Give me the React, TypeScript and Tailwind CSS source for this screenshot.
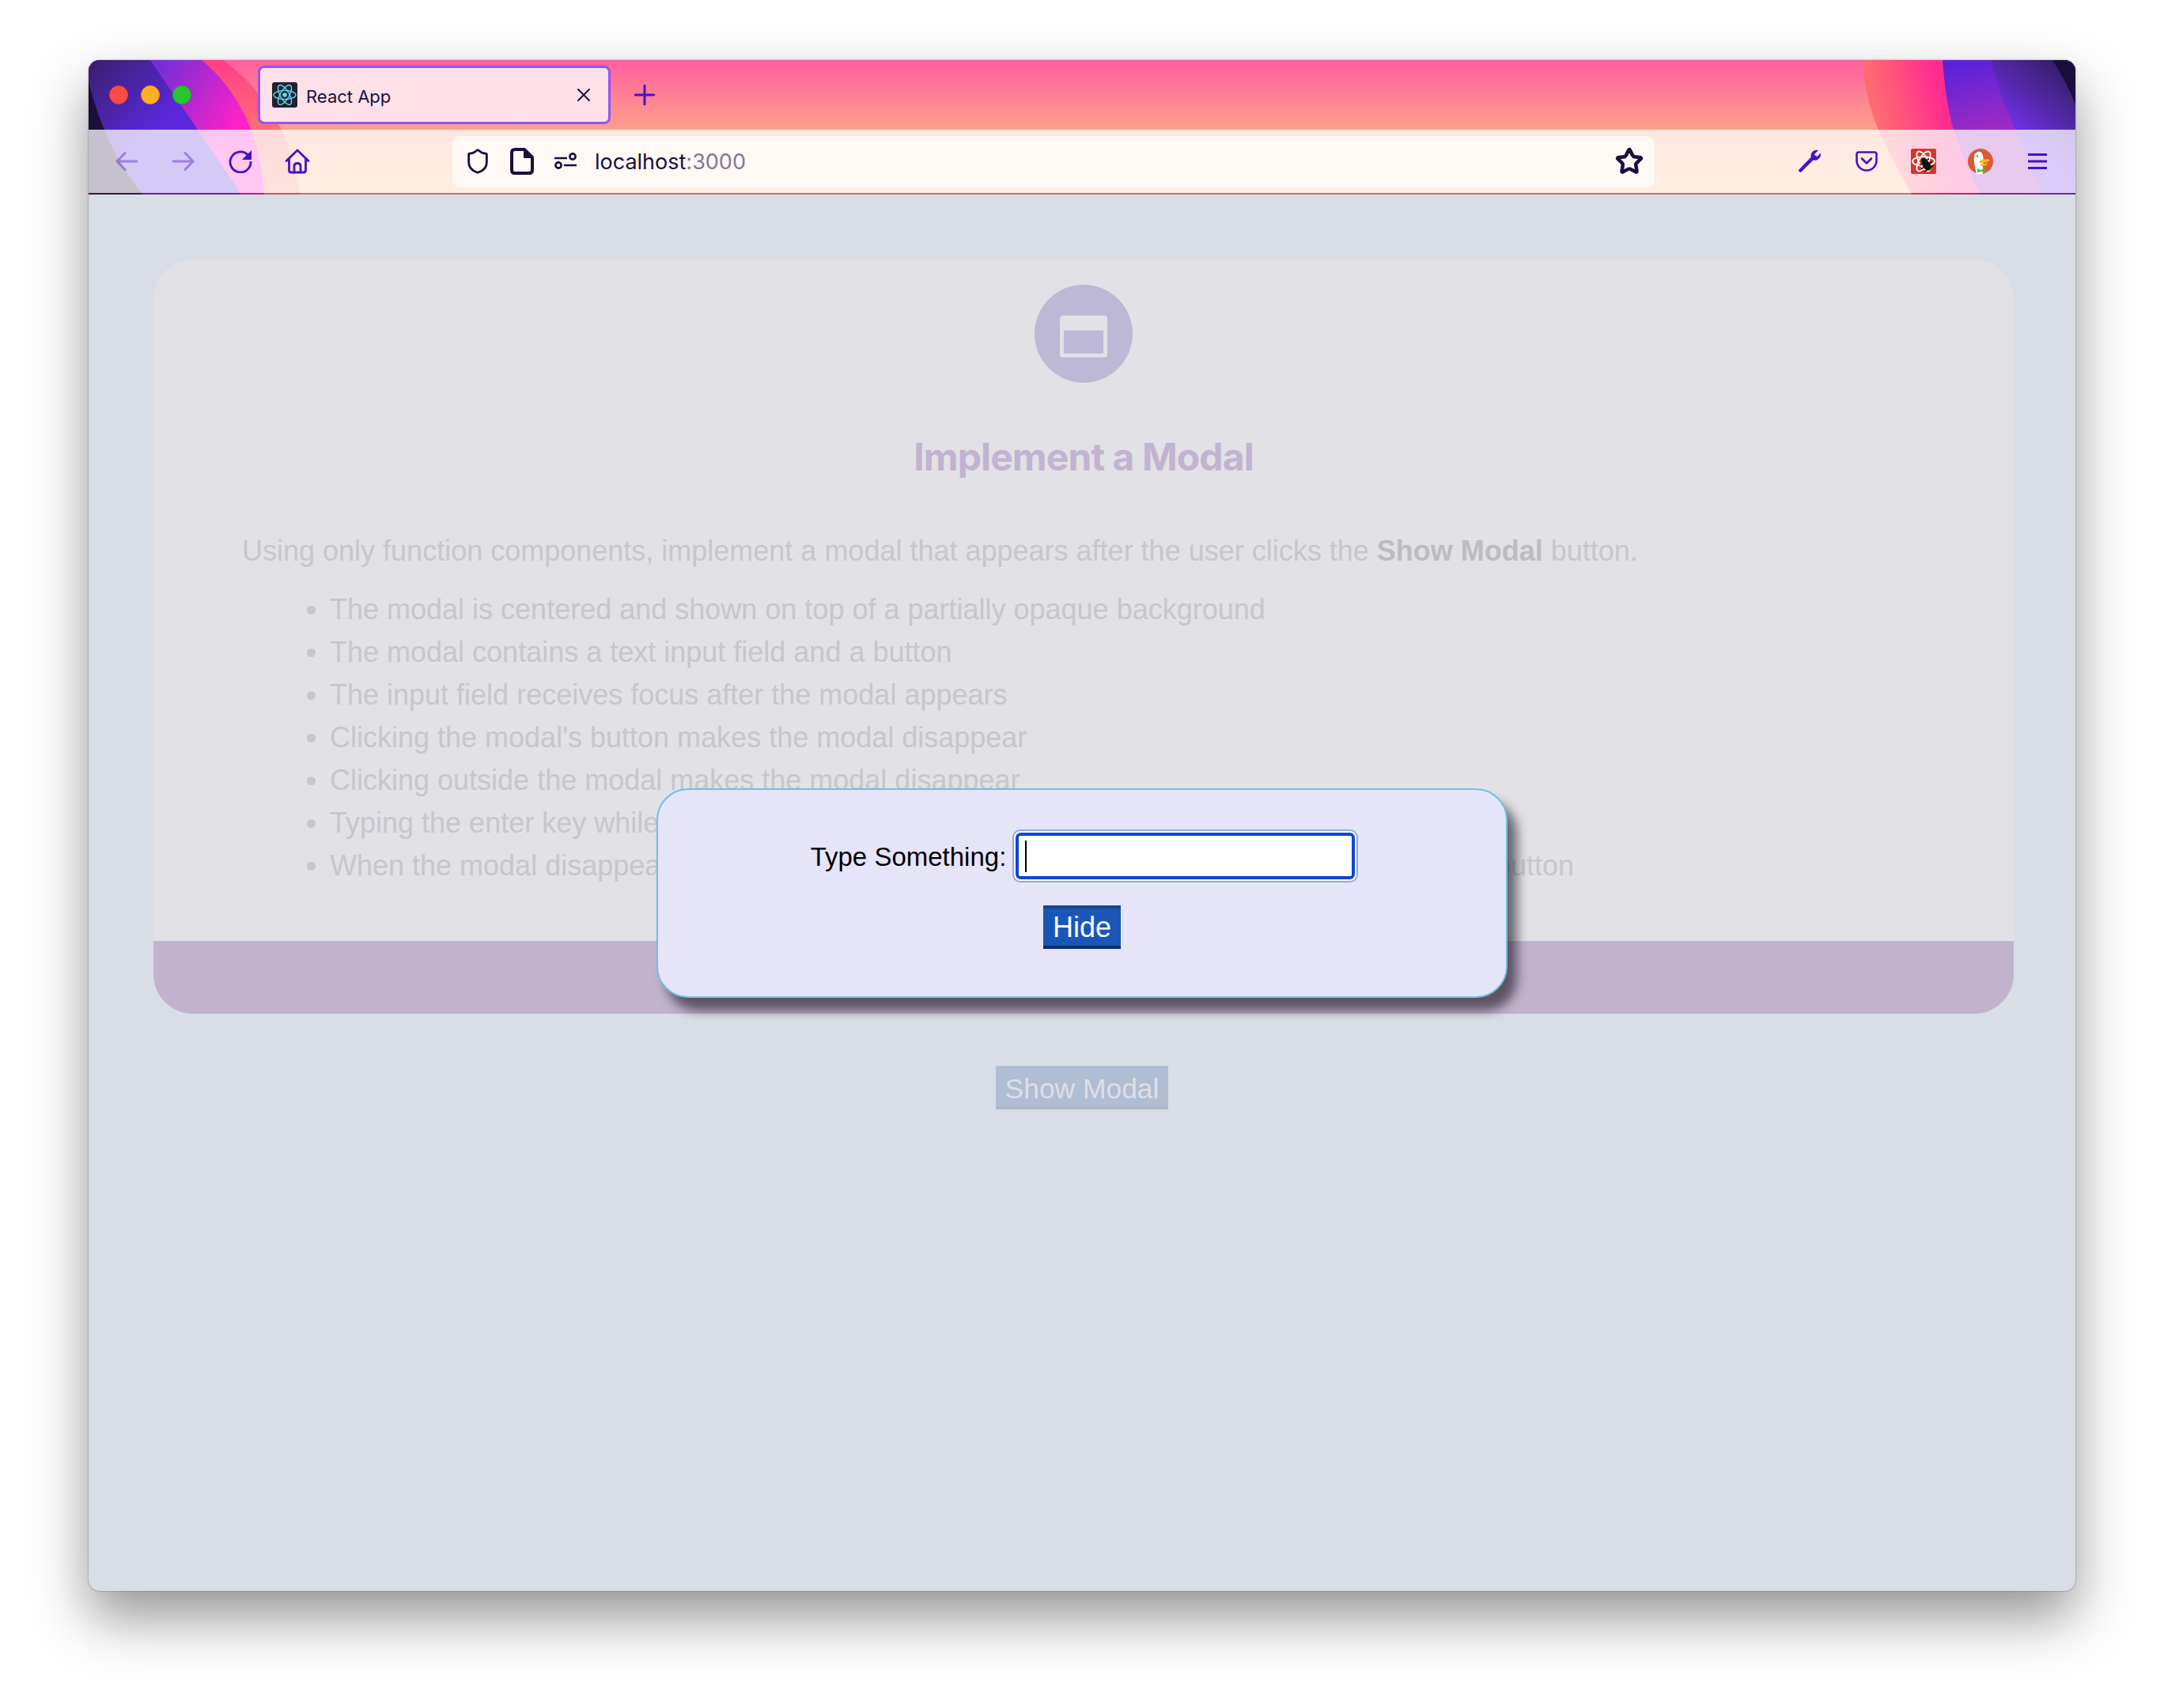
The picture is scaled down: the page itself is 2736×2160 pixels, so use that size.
import { Plus, Shield, Star, X } from "lucide-react";

const requirements = [
  "The modal is centered and shown on top of a partially opaque background",
  "The modal contains a text input field and a button",
  "The input field receives focus after the modal appears",
  "Clicking the modal's button makes the modal disappear",
  "Clicking outside the modal makes the modal disappear",
  "Typing the enter key while the input field has focus makes the modal disappear",
  "When the modal disappears, the input value is cleared and focus returns to the Show Modal button",
];

function ThemeArt() {
  return (
    <svg className="absolute inset-0 h-[170px] w-[2512px]" viewBox="0 0 2512 170" preserveAspectRatio="none">
      <defs>
        <linearGradient id="base" x1="0" y1="0" x2="0" y2="1">
          <stop offset="0" stopColor="#ff5f9f" />
          <stop offset="0.52" stopColor="#ffa088" />
          <stop offset="1" stopColor="#ffc088" />
        </linearGradient>
        <linearGradient id="coralL" x1="0" y1="0" x2="0" y2="1">
          <stop offset="0" stopColor="#ff3f88" />
          <stop offset="0.55" stopColor="#ff7070" />
          <stop offset="1" stopColor="#ff9070" />
        </linearGradient>
        <linearGradient id="magentaL" gradientUnits="userSpaceOnUse" x1="90" y1="0" x2="195" y2="70">
          <stop offset="0" stopColor="#6f2fd8" />
          <stop offset="1" stopColor="#ff20c8" />
        </linearGradient>
        <linearGradient id="purpleL" gradientUnits="userSpaceOnUse" x1="10" y1="0" x2="90" y2="80">
          <stop offset="0" stopColor="#3a1f72" />
          <stop offset="1" stopColor="#5a28da" />
        </linearGradient>
        <linearGradient id="magentaR" gradientUnits="userSpaceOnUse" x1="2260" y1="60" x2="2340" y2="40">
          <stop offset="0" stopColor="#ff6a70" />
          <stop offset="1" stopColor="#ff2c90" />
        </linearGradient>
        <linearGradient id="violetR" gradientUnits="userSpaceOnUse" x1="2380" y1="0" x2="2400" y2="100">
          <stop offset="0" stopColor="#5a22d8" />
          <stop offset="1" stopColor="#a52cc0" />
        </linearGradient>
        <linearGradient id="darkR" gradientUnits="userSpaceOnUse" x1="2490" y1="10" x2="2430" y2="85">
          <stop offset="0" stopColor="#36206c" />
          <stop offset="1" stopColor="#7030e8" />
        </linearGradient>
      </defs>
      <rect width="2512" height="170" fill="url(#base)" />
      <path d="M0 0H170Q252 60 268 170H0Z" fill="url(#coralL)" />
      <path d="M0 0H143Q215 60 222 170H0Z" fill="url(#magentaL)" />
      <path d="M0 0H78L138 88L193 170H0Z" fill="url(#purpleL)" />
      <path d="M0 27Q20 110 68 170H0Z" fill="#1a0e3a" />
      <path d="M2242 0Q2248 55 2263 88T2305 170H2512V0Z" fill="url(#magentaR)" />
      <path d="M2344 0Q2348 55 2358 88T2391 170H2512V0Z" fill="url(#violetR)" />
      <path d="M2405 0Q2418 50 2436 88T2468 170H2512V0Z" fill="url(#darkR)" />
      <path d="M2483 0Q2500 26 2512 56V0Z" fill="#1a0e3a" />
    </svg>
  );
}

function ReactFavicon() {
  return (
    <svg width="32" height="32" viewBox="0 0 32 32">
      <rect width="32" height="32" rx="3" fill="#20232a" />
      <g fill="none" stroke="#61dafb" strokeWidth="1.4">
        <ellipse cx="16" cy="16" rx="14" ry="5.6" />
        <ellipse cx="16" cy="16" rx="14" ry="5.6" transform="rotate(60 16 16)" />
        <ellipse cx="16" cy="16" rx="14" ry="5.6" transform="rotate(120 16 16)" />
      </g>
      <circle cx="16" cy="16" r="2.8" fill="#61dafb" />
    </svg>
  );
}

function NavArrow({ flip }: { flip?: boolean }) {
  return (
    <svg
      width="28"
      height="26"
      viewBox="0 0 28 26"
      fill="none"
      stroke="#4a0fc4"
      strokeWidth="3"
      className={flip ? "rotate-180 opacity-40" : "opacity-40"}
    >
      <path d="M28 13H2M13 1.5L2 13L13 24.5" />
    </svg>
  );
}

function ReloadIcon() {
  return (
    <svg width="30" height="30" viewBox="0 0 30 30" fill="none">
      <path d="M24 6.5A13 13 0 1 0 28 15" stroke="#4a0fc4" strokeWidth="2.8" />
      <path d="M29 1V13H17Z" fill="#4a0fc4" />
    </svg>
  );
}

function HomeIcon() {
  return (
    <svg width="32" height="32" viewBox="0 0 32 32" fill="none" stroke="#4a0fc4" strokeWidth="2.8" strokeLinejoin="round" strokeLinecap="round">
      <path d="M2 15.5L16 2L30 15.5M5.5 12.5V27.5Q5.5 30 8 30H24Q26.5 30 26.5 27.5V12.5" />
      <path d="M12 30V22Q12 18.5 16 18.5T20 22V30" />
    </svg>
  );
}

function PageIcon() {
  return (
    <svg width="30" height="34" viewBox="0 0 30 34" fill="none" stroke="#1a0f3c" strokeWidth="4" strokeLinejoin="round">
      <path d="M6 2H18L28 12V28Q28 32 24 32H6Q2 32 2 28V6Q2 2 6 2Z" />
      <path d="M18 3V12H27" strokeWidth="2" fill="#1a0f3c" />
    </svg>
  );
}

function PermissionsIcon() {
  return (
    <svg width="30" height="22" viewBox="0 0 30 22" fill="none" stroke="#1a0f3c" strokeWidth="2.6">
      <path d="M1 7H17M13 16H29" />
      <circle cx="24" cy="5" r="3.6" />
      <circle cx="6" cy="16" r="3.6" />
    </svg>
  );
}

function WrenchIcon() {
  return (
    <svg width="30" height="32" viewBox="0 0 30 30">
      <path
        d="M26 1C20 0 16 4 16.5 10L1.5 25.5C0 27 2.5 30 4.2 28.5L19.5 13.5C25 15 30 10 29 4.5L24.5 9L20.5 6.5Z"
        fill="#4a0fc4"
      />
    </svg>
  );
}

function PocketIcon() {
  return (
    <svg width="28" height="26" viewBox="0 0 28 26" fill="none" stroke="#4a0fc4" strokeWidth="2.6" strokeLinejoin="round" strokeLinecap="round">
      <path d="M4 1.5H24Q26.5 1.5 26.5 4V12C26.5 19 21 24.5 14 24.5S1.5 19 1.5 12V4Q1.5 1.5 4 1.5Z" />
      <path d="M8 9.5L14 15.5L20 9.5" />
    </svg>
  );
}

function AtomBugIcon() {
  return (
    <svg width="32" height="32" viewBox="0 0 32 32">
      <rect width="32" height="32" rx="2" fill="#d0392b" />
      <g fill="none" stroke="#fff" strokeWidth="1.8">
        <ellipse cx="16" cy="16" rx="14" ry="5.8" />
        <ellipse cx="16" cy="16" rx="14" ry="5.8" transform="rotate(60 16 16)" />
        <ellipse cx="16" cy="16" rx="14" ry="5.8" transform="rotate(120 16 16)" />
      </g>
      <circle cx="16" cy="15" r="3" fill="#111" />
      <g transform="rotate(-35 20 21)" stroke="#111" strokeWidth="1.6">
        <ellipse cx="20" cy="21" rx="4" ry="6.5" fill="#111" />
        <path d="M13 16H27M12 21H28M13 26H27" />
      </g>
    </svg>
  );
}

function DuckIcon() {
  return (
    <svg width="32" height="32" viewBox="0 0 32 32">
      <circle cx="16" cy="16" r="16" fill="#de5833" />
      <path d="M8 9C9 4 16 2 18 6C20 10 20 14 19 20L19 32H11C9 23 7 15 8 9Z" fill="#fff" />
      <circle cx="12" cy="9.5" r="1.1" fill="#2d4f8e" />
      <path d="M15 15C19 14 24 12.5 28 14C26 17 21 18.5 15 18Z" fill="#fdb92c" />
      <path d="M16 19.5L26 18.5C24 21 20 22.5 16 22Z" fill="#fdb92c" />
      <path d="M12 25L16.5 27L22 24.5V30L16.5 28.5L12 30.5Z" fill="#4cba3c" />
    </svg>
  );
}

function MenuIcon() {
  return (
    <svg width="24" height="22" viewBox="0 0 24 22" stroke="#4a0fc4" strokeWidth="3">
      <path d="M0 2.5H24M0 11H24M0 19.5H24" />
    </svg>
  );
}

function Slot({ children }: { children: React.ReactNode }) {
  return <span className="flex w-[72px] justify-center">{children}</span>;
}

function BackgroundPage() {
  return (
    <div className="flex flex-col items-center pt-[82px]">
      <div className="ml-[82px] flex h-[954px] w-[2352px] flex-col self-start overflow-hidden rounded-[50px] bg-[#e1e1e6]">
        <div className="mx-auto mt-[32px] flex h-[124px] w-[124px] items-center justify-center rounded-full bg-[#bdb8d6]">
          <div className="mt-[7px] flex h-[53px] w-[60px] items-end justify-center rounded-[4px] bg-[#e1e1e6] pb-[5px]">
            <div className="h-[29px] w-[50px] bg-[#bdb8d6]" />
          </div>
        </div>
        <h1 className="mt-[65px] text-center font-['Inter',sans-serif] text-[48px] leading-[58px] font-bold tracking-[-0.9px] text-[#c2b3d0]">
          Implement a Modal
        </h1>
        <p className="mt-[63px] pl-[112px] text-[36px] leading-[54px] text-[#c6c6cb]">
          Using only function components, implement a modal that appears after the user clicks the{" "}
          <b className="font-bold text-[#bcbcc2]">Show Modal</b> button.
        </p>
        <ul className="mt-[20px] list-disc pl-[223px] text-[36px] leading-[54px] text-[#c6c6cb]">
          {requirements.map((item) => (
            <li key={item}>{item}</li>
          ))}
        </ul>
        <div className="mt-auto h-[92px] bg-[#c2b3cd]" />
      </div>
      <button className="mt-[66px] h-[55px] w-[218px] border-b-[4px] border-b-[#aeb6c6] bg-[#b1bdd3] pt-[4px] text-[35.4px] leading-[50px] text-[#dedfe6]">
        Show Modal
      </button>
    </div>
  );
}

function Modal() {
  return (
    <div className="absolute inset-0 flex items-center justify-center">
      <div className="flex h-[265px] w-[1076px] flex-col items-center rounded-[40px] border-[2px] border-[#6fc0e0] bg-[#e6e4f9] pt-[50px] shadow-[12px_16px_14px_rgba(30,25,35,0.62)]">
        <div className="flex items-center gap-[8px] pl-[6px]">
          <label className="mt-[4px] text-[33px] leading-[50px] text-black">Type Something:</label>
          <div className="relative rounded-[10px] border-[4px] border-[#94a9dc]">
            <input
              readOnly
              className="block h-[59px] w-[429px] rounded-[6px] border-[4px] border-[#0a48d8] bg-white caret-transparent outline-[2px] outline-white"
            />
            <span className="absolute top-[10px] left-[12px] h-[40px] w-[2px] bg-black" />
          </div>
        </div>
        <button className="mt-[29px] h-[55px] w-[98px] border-t-[4px] border-b-[4px] border-t-[#15458f] border-b-[#0d2c6c] bg-[#1a56b8] text-[36px] leading-[47px] text-white">
          Hide
        </button>
      </div>
    </div>
  );
}

export default function App() {
  return (
    <div className="flex h-[2160px] w-[2736px] items-start justify-center bg-white pt-[76px] font-['Liberation_Sans',Arial,sans-serif]">
      <div className="relative flex h-[1936px] w-[2512px] flex-col overflow-hidden rounded-[14px] bg-[#d9dde6] shadow-[0_0_2px_rgba(0,0,0,0.5),0_34px_70px_rgba(0,0,0,0.42)]">
        <header className="relative h-[170px] shrink-0 font-['Inter',sans-serif]">
          <ThemeArt />
          <div className="absolute inset-x-0 bottom-0 h-[2px] bg-[#6a2040]/45" />
          <div className="relative flex h-[88px] items-center">
            <div className="flex items-center gap-[16px] pl-[26px]">
              <span className="h-[24px] w-[24px] rounded-full border border-[#e0403c] bg-[#ff4a45]" />
              <span className="h-[24px] w-[24px] rounded-full border border-[#e09a20] bg-[#ffb020]" />
              <span className="h-[24px] w-[24px] rounded-full border border-[#22a82c] bg-[#28c530]" />
            </div>
            <div className="mt-[-1px] ml-[84px] flex h-[74px] w-[446px] items-center rounded-[8px] border-[3px] border-[#9055ff] bg-[#ffdfe8] pr-[17px] pl-[15px]">
              <ReactFavicon />
              <span className="mt-[4px] ml-[11px] text-[22px] leading-none text-[#1a0f3c]">React App</span>
              <X className="ml-auto" size={28} strokeWidth={1.6} color="#1a0f3c" />
            </div>
            <Plus className="ml-[23px]" size={40} strokeWidth={1.8} color="#4a0fc4" />
          </div>
          <div className="relative flex h-[80px] items-center bg-white/75">
            <div className="flex items-center pl-[12px]">
              <Slot><NavArrow /></Slot>
              <Slot><NavArrow flip /></Slot>
              <Slot><ReloadIcon /></Slot>
              <Slot><HomeIcon /></Slot>
            </div>
            <div className="ml-[160px] flex h-[65px] w-[1520px] items-center rounded-[10px] bg-[#fff9f6] pr-[14px] pl-[15px]">
              <Shield size={34} strokeWidth={2} color="#1a0f3c" />
              <span className="ml-[24px] flex"><PageIcon /></span>
              <span className="ml-[25px] flex"><PermissionsIcon /></span>
              <span className="mt-[2px] ml-[22px] text-[27px] text-[#1a0f3c]">
                localhost<span className="text-[#80788f]">:3000</span>
              </span>
              <Star className="ml-auto" size={36} strokeWidth={3} color="#1a0f3c" />
            </div>
            <div className="ml-[160px] flex items-center">
              <Slot><WrenchIcon /></Slot>
              <Slot><PocketIcon /></Slot>
              <Slot><AtomBugIcon /></Slot>
              <Slot><DuckIcon /></Slot>
              <Slot><MenuIcon /></Slot>
            </div>
          </div>
        </header>
        <main className="relative flex-1">
          <BackgroundPage />
          <Modal />
        </main>
      </div>
    </div>
  );
}
